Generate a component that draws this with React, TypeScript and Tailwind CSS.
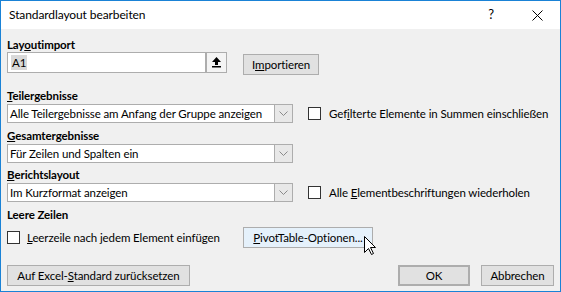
import React from 'react';

const Box = () => (
    <span className="block w-[13px] h-[13px] border border-[#333333] bg-white shrink-0" />
);

const Chevron = () => (
    <svg width="9" height="5" viewBox="0 0 9 5">
        <path d="M0.5 0.5 L4.5 4.5 L8.5 0.5" fill="none" stroke="#8a8a8a" strokeWidth="1" />
    </svg>
);

const Select: React.FC<{ value: string }> = ({ value }) => (
    <div className="w-[286px] h-[19px] border border-[#adadad] bg-white flex shrink-0">
        <div className="flex-1 pl-[2px] leading-[17px] overflow-hidden">{value}</div>
        <div className="w-[18px] h-full bg-[#e8e8e8] border-l border-[#adadad] flex items-center justify-center">
            <Chevron />
        </div>
    </div>
);

const Btn: React.FC<{ className?: string; children: React.ReactNode }> = ({ className = '', children }) => (
    <div className={`h-[21px] bg-[#e1e1e1] border border-[#adadad] flex items-center justify-center shrink-0 ${className}`}>
        <span>{children}</span>
    </div>
);

const Label: React.FC<{ className?: string; children: React.ReactNode }> = ({ className = '', children }) => (
    <div className={`h-[15px] leading-[15px] font-bold ${className}`}>{children}</div>
);

export default function App() {
    return (
        <div className="relative w-[561px] h-[292px] border border-[#1a82d6] bg-[#f0f0f0] flex flex-col text-[11.5px] tracking-[-0.1px] text-black whitespace-nowrap font-['Lato','Noto_Sans',sans-serif]">
            <div className="h-[28px] bg-white flex items-center shrink-0 text-[12px]">
                <span className="pl-[8px] flex-1">Standardlayout bearbeiten</span>
                <span className="w-[46px] text-center text-[13px]">?</span>
                <span className="w-[46px] flex justify-center">
                    <svg width="11" height="11" viewBox="0 0 11 11">
                        <path d="M0.5 0.5 L10.5 10.5 M10.5 0.5 L0.5 10.5" stroke="#000" strokeWidth="1" />
                    </svg>
                </span>
            </div>

            <div className="flex-1 px-[6px] flex flex-col">
                <Label className="mt-[8px]">Lay<u>o</u>utimport</Label>
                <div className="flex items-start">
                    <div className="w-[199px] h-[21px] border border-[#adadad] bg-white flex items-center pl-[3px]">
                        <span className="bg-[#d9d9d9] leading-[15px] px-[1px]">A1</span>
                    </div>
                    <div className="w-[21px] h-[21px] border border-[#adadad] bg-[#f4f4f4] flex items-center justify-center">
                        <svg width="9" height="11" viewBox="0 0 9 11">
                            <path d="M4.5 0 L9 5 L6 5 L6 8 L3 8 L3 5 L0 5 Z" fill="#000" />
                            <rect x="0" y="9" width="9" height="1.5" fill="#000" />
                        </svg>
                    </div>
                    <Btn className="w-[76px] h-[20px] ml-[16px] mt-[2px]">I<u>m</u>portieren</Btn>
                </div>

                <Label className="mt-[13px]"><u>T</u>eilergebnisse</Label>
                <div className="flex items-center mt-[1px]">
                    <Select value="Alle Teilergebnisse am Anfang der Gruppe anzeigen" />
                    <span className="ml-[15px]"><Box /></span>
                    <span className="ml-[8px]">Gef<u>i</u>lterte Elemente in Summen einschließen</span>
                </div>

                <Label className="mt-[5px]"><u>G</u>esamtergebnisse</Label>
                <div className="flex items-center mt-[1px]">
                    <Select value="Für Zeilen und Spalten ein" />
                </div>

                <Label className="mt-[4px]"><u>B</u>erichtslayout</Label>
                <div className="flex items-center mt-[1px]">
                    <Select value="Im Kurzformat anzeigen" />
                    <span className="ml-[15px]"><Box /></span>
                    <span className="ml-[8px]">Alle <u>E</u>lementbeschriftungen wiederholen</span>
                </div>

                <Label className="mt-[5px]">Leere Zeilen</Label>
                <div className="flex items-center h-[21px] mt-[5px]">
                    <div className="w-[236px] flex items-center">
                        <Box />
                        <span className="ml-[7px]"><u>L</u>eerzeile nach jedem Element einfügen</span>
                    </div>
                    <Btn className="w-[130px] bg-[#e5f1fb] border-[#0078d7]"><u>P</u>ivotTable-Optionen...</Btn>
                </div>

                <div className="flex items-center justify-between mt-[17px]">
                    <Btn className="w-[183px]">Auf Excel-<u>S</u>tandard zurücksetzen</Btn>
                    <div className="flex gap-[11px]">
                        <Btn className="w-[72px] border-2 border-[#0078d7]">OK</Btn>
                        <Btn className="w-[73px]">Abbrechen</Btn>
                    </div>
                </div>
            </div>

            <svg className="absolute left-[363px] top-[235px]" width="13" height="20" viewBox="0 0 13 20">
                <path d="M0.5 0.5 L0.5 16.5 L4.5 12.5 L7.5 18.5 L9.5 17.5 L6.5 11.5 L11.5 11.5 Z" fill="#fff" stroke="#000" strokeWidth="1" />
            </svg>
        </div>
    );
}
